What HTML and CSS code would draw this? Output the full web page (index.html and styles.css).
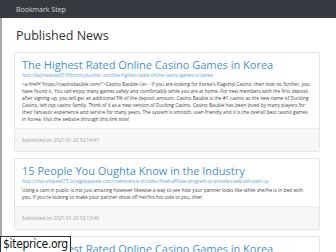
FILE: index.html
```html
<!DOCTYPE html>
<html lang="en">
<head>
    <meta charset="UTF-8">
    <meta name="viewport" content="width=device-width, initial-scale=1.0">
    <title>Bookmark Step</title>
    <link rel="stylesheet" href="styles.css">
</head>
<body>
    <!-- Top navigation -->
    <nav class="navbar">
        <a class="brand" href="#">Bookmark Step</a>
    </nav>

    <div class="page">
        <h1 class="page-title">Published News</h1>

        <div class="card">
            <div class="card-body">
                <a class="card-title" href="#">The Highest Rated Online Casino Games in Korea</a>
                <a class="card-link" href="#">http://kajinwastes81656mzm.yousher.com/the-highest-rated-online-casino-games-in-korea</a>
                <p class="card-text">&lt;a href="https://casinobauble.com/"&gt;Casino Bauble&lt;/a&gt; - If you are looking for Korea's Flagship Casino, then look no further, you have found it. You can enjoy many games safely and comfortably while you are at home. For new members with the first deposit after signing up, you will get an additional 5% of the deposit amount. Casino Bauble is the #1 casino as the new name of Ducking Casino, teh top casino family. Think of it as a new version of Ducking Casino. Casino Bauble has been loved by many players for their fantastic experience and service for many years. The system is smooth, user-friendly and it is the overall best casino games in Korea. Visit the website through this link now!</p>
            </div>
            <div class="card-footer">Submitted on 2021-01-20 02:14:47</div>
        </div>

        <div class="card">
            <div class="card-body">
                <a class="card-title" href="#">15 People You Oughta Know in the Industry</a>
                <a class="card-link" href="#">http://chaturbatee075.localgiaspasale.com/crakrevenue-includes-fixed-affiliate-program-to-provides-webcam-start-up</a>
                <p class="card-text">Using a cam in public is not just amazing however likewise a way to see how your partner looks like while she/he is in bed with you. If you're looking to make your partner show off her/his hot side to you, then</p>
            </div>
            <div class="card-footer">Submitted on 2021-01-20 02:13:49</div>
        </div>

        <div class="card">
            <div class="card-body">
                <a class="card-title" href="#">The Highest Rated Online Casino Games in Korea</a>
            </div>
        </div>
    </div>

    <div class="watermark">$iteprice.org</div>
</body>
</html>
```

FILE: styles.css
```css
body {
    margin: 0;
    font-family: "Open Sans", Arial, sans-serif;
    background-color: #ffffff;
    color: #333333;
    height: 252px;
    overflow: hidden;
}

a {
    text-decoration: none;
}

.navbar {
    height: 18px;
    background-color: #343a40;
    display: flex;
    align-items: center;
    padding-left: 16px;
}

.brand {
    color: #d8d8d8;
    font-size: 7px;
}

.page {
    border-left: 2px solid #a8a8a8;
    padding: 9px 16px 0 12px;
}

.page-title {
    font-size: 12.5px;
    font-weight: 400;
    line-height: 17px;
    margin: 0 0 8px 2px;
    color: #333333;
}

.card {
    border: 1px solid #e6e6e6;
    border-radius: 2px;
    margin-bottom: 6px;
}

.card-body {
    padding: 4px 7px 5px 7px;
}

.card-title {
    display: block;
    font-size: 11px;
    color: #4392d4;
    line-height: 15px;
}

.card-link {
    display: block;
    font-size: 4.5px;
    color: #5a9fdc;
    line-height: 7px;
    margin-bottom: 2px;
    white-space: nowrap;
    overflow: hidden;
}

.card-text {
    margin: 0;
    font-size: 4.8px;
    line-height: 7px;
    color: #444444;
}

.card-footer {
    background-color: #f7f7f7;
    border-top: 1px solid #ececec;
    height: 22px;
    display: flex;
    align-items: center;
    padding-left: 7px;
    font-size: 4.8px;
    color: #9a9a9a;
}

.watermark {
    position: absolute;
    left: 0;
    top: 236px;
    background-color: #ffffff;
    color: #111111;
    font-family: "DejaVu Sans Condensed", "DejaVu Sans", sans-serif;
    font-size: 12px;
    line-height: 15px;
    letter-spacing: -0.3px;
    padding: 0 2px;
    border: 1px solid #333333;
}
```
